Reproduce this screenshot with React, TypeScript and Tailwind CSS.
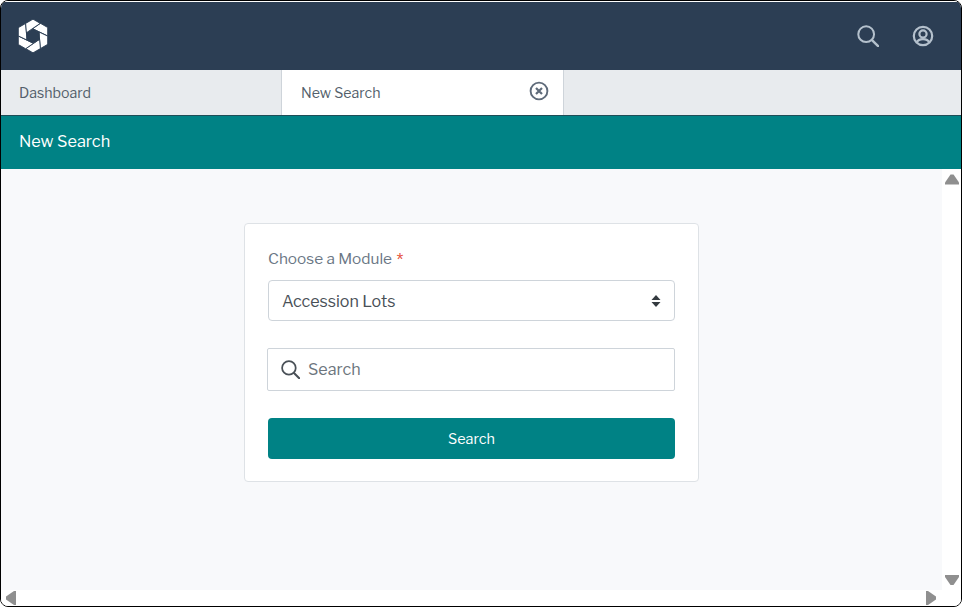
const font = "font-['Libre_Franklin','Liberation_Sans',Arial,sans-serif]";

const bladeAngles = [0, 60, 120, 180, 240, 300];

function Logo() {
  return (
    <svg width="32" height="36" viewBox="-16 -18 32 36">
      {bladeAngles.map((a) => (
        <polygon
          key={a}
          points="7.36,-12.75 14.7,-8.5 14.7,0 0,-7 -6.06,-3.5"
          fill="#fff"
          stroke="#2c3e54"
          strokeWidth="0.9"
          transform={`rotate(${a})`}
        />
      ))}
    </svg>
  );
}

function SearchIcon({ size, className }: { size: number; className: string }) {
  return (
    <svg width={size} height={size} viewBox="0 0 24 24" fill="none" stroke="currentColor" className={className}>
      <circle cx="10" cy="10" r="8.6" strokeWidth="2.2" />
      <path d="M16.4 16.4L23 23" strokeWidth="2.6" strokeLinecap="round" />
    </svg>
  );
}

function UserIcon() {
  return (
    <svg width="22" height="22" viewBox="0 0 22 22" fill="none" stroke="#b4c0cc" strokeWidth="2.2">
      <circle cx="11" cy="11" r="9.2" />
      <circle cx="11" cy="9" r="3.6" />
      <path d="M4.8 17.5c1-2.6 3-3.4 6.2-3.4s5.200.8 6.200 3.400" />
    </svg>
  );
}

function CloseCircle() {
  return (
    <svg width="20" height="20" viewBox="0 0 20 20" fill="none" stroke="#5f6b7a">
      <circle cx="10" cy="10" r="8.4" strokeWidth="1.9" />
      <path d="M7 7l6 6M13 7l-6 6" strokeWidth="2.2" />
    </svg>
  );
}

function ScrollArrow({ points }: { points: string }) {
  return (
    <svg width="14" height="14" viewBox="0 0 14 14" fill="#8f8f8f">
      <polygon points={points} />
    </svg>
  );
}

export default function App() {
  return (
    <div className={`${font} h-[608px] w-[962px] overflow-hidden bg-white`}>
      <div className="flex h-[607px] flex-col overflow-hidden rounded-[8px] border border-black">
        <div className="h-px bg-white" />
        <header className="flex h-[68px] items-center justify-between bg-[#2c3e54] pr-[27px] pl-[16px]">
          <Logo />
          <div className="flex items-center gap-[33px] text-[#b4c0cc]">
            <SearchIcon size={22} className="" />
            <UserIcon />
          </div>
        </header>

        <nav className="flex h-[45px] bg-[#e8ebee] text-[14.2px]">
          <div className="flex w-[281px] items-center border-r border-[#ced4da] pt-[1px] pl-[18px] text-[#545f6b]">
            Dashboard
          </div>
          <div className="flex w-[282px] items-center justify-between border-r border-[#ced4da] bg-white pr-[14px] pl-[19px] text-[#545f6b]">
            <span className="pt-[1px]">New Search</span>
            <span className="mb-[3px]">
              <CloseCircle />
            </span>
          </div>
        </nav>

        <div className="flex h-[54px] items-center border-t border-[#1f4d57] bg-[#008285] pb-[2px] pl-[18px] text-[16.3px] text-white">
          New Search
        </div>

        <div className="flex min-h-0 flex-1">
          <main className="flex flex-1 items-start justify-center bg-[#f8f9fb] pt-[54px]">
            <form className="flex h-[259px] w-[455px] flex-col rounded-[4px] border border-[#dee2e6] bg-white pt-[25px] pr-[23px] pl-[22px]">
              <label className="h-[31px] pl-[1px] text-[15.4px] leading-[20px] text-[#6b7785]">
                Choose a Module{" "}
                <span className="ml-[1px] align-[-3px] text-[18px] leading-none text-[#e5533d]">*</span>
              </label>
              <div className="ml-[1px] flex h-[41px] items-center justify-between rounded-[4px] border border-[#ced4da] pt-[1px] pr-[13px] pl-[13px] text-[16.1px] text-[#495057]">
                <span>Accession Lots</span>
                <svg width="10" height="14" viewBox="0 0 10 14" fill="#343a40">
                  <polygon points="5,1 9.500,6 0.500,6" />
                  <polygon points="0.500,8 9.500,8 5,13" />
                </svg>
              </div>
              <div className="mt-[27px] flex h-[43px] items-center gap-[8px] rounded-[2px] border border-[#ced4da] pl-[13px] text-[16.1px] text-[#6c757d]">
                <SearchIcon size={19} className="text-[#495057]" />
                <span>Search</span>
              </div>
              <button
                type="button"
                className="mt-[27px] ml-[1px] h-[41px] rounded-[4px] bg-[#008285] pt-[2px] text-[14.4px] text-white"
              >
                Search
              </button>
            </form>
          </main>
          <aside className="flex w-[19px] flex-col items-center justify-between bg-white pt-[4px] pb-[3px]">
            <ScrollArrow points="5.500,1.500 8.500,1.500 14,9.500 14,11.500 0,11.500 0,9.500" />
            <ScrollArrow points="0,2 14,2 14,4 8.500,12 5.500,12 0,4" />
          </aside>
        </div>

        <div className="flex h-[16px] items-center justify-between bg-white pr-[22px] pl-[4px]">
          <ScrollArrow points="11,0 11,14 9,14 1,8.500 1,5.500 9,0" />
          <ScrollArrow points="1,0 3,0 11,5.500 11,8.500 3,14 1,14" />
        </div>
      </div>
    </div>
  );
}
